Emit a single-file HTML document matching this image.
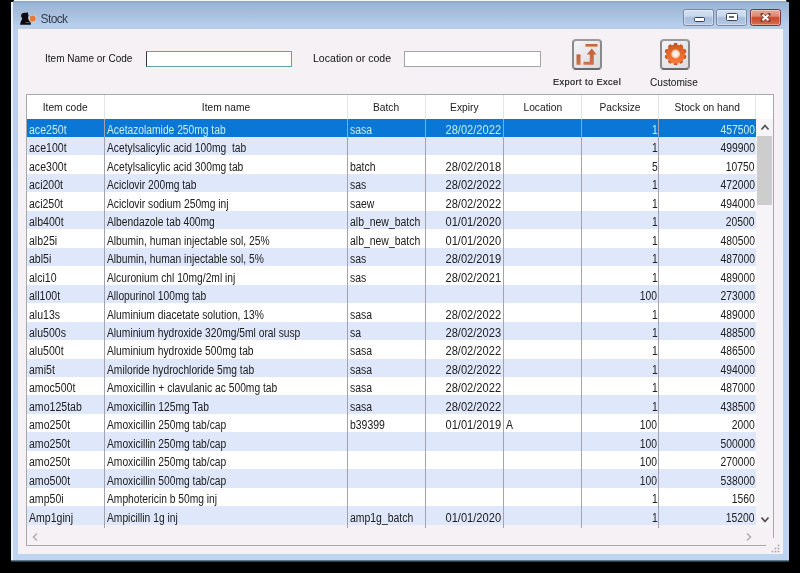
<!DOCTYPE html>
<html><head><meta charset="utf-8">
<style>
*{margin:0;padding:0;box-sizing:border-box}
html,body{width:800px;height:573px;overflow:hidden;background:#000}
body{position:relative;font-family:"Liberation Sans",sans-serif;font-size:11px;color:#202020}
.abs{position:absolute}
#win{position:absolute;left:11px;top:0;width:778px;height:562px;background:linear-gradient(#93acd6 1px,#9cbad8 6px,#a8bcdc 12px,#a9c4e0 17px,#b5cdea 24px,#bad0ec 29px,#c0d4f0 100%)}
#winhi{position:absolute;left:11px;top:0;width:2px;height:561px;background:#e8f2f8}
#wintop{position:absolute;left:11px;top:0;width:778px;height:1px;background:#f2f8f2}
#wintop2{position:absolute;left:13px;top:1px;width:776px;height:1px;background:#90a2bc}
#winbot{position:absolute;left:11px;top:560px;width:778px;height:2px;background:linear-gradient(#7a98a8,#0c2028)}
#content{position:absolute;left:18px;top:29px;width:764.5px;height:525px;background:#f5f1f5}
#content:before{content:"";position:absolute;left:0;top:0;right:0;height:1px;background:#f0f2fa}
#content:after{content:"";position:absolute;left:0;bottom:0;right:0;height:1.5px;background:#eef4fc}
.title{position:absolute;left:40.5px;top:11.8px;font-size:12px;letter-spacing:-0.6px;color:#343a4c;white-space:nowrap}
.btn{position:absolute;top:9px;height:17px;border:1px solid #7888a4;border-radius:2.5px;background:linear-gradient(#d4e0f0 0%,#c8d8ec 40%,#a8bedc 52%,#b4c8e4 100%);box-shadow:inset 0 0 0 1px rgba(255,255,255,0.35)}
.close{background:linear-gradient(#eaa898 0%,#dc8a74 40%,#c8482a 52%,#d6704c 100%);border-color:#6c3a40}
.lbl{position:absolute;white-space:nowrap;color:#141414;transform-origin:0 0}
.inp{position:absolute;background:#fff;border:1px solid #a4a4a4}
.ibox{position:absolute;width:30.5px;height:30.5px;border:2px solid #8a8a8c;border-color:#9a9a9c #8a8a8c #6a6a6c #8a8a8c;border-radius:4px;background:linear-gradient(135deg,#f4f4f8,#dcdce0)}
#tbl{position:absolute;left:26px;top:94px;width:748px;height:452px;border:1px solid #a8a8a8;background:#f5f1f5}
#tblcut{position:absolute;left:766px;top:538px;width:9px;height:9px;background:#f5f1f5}
#hdr{position:absolute;left:27px;top:95px;width:746px;height:23.5px;background:#fff}
.h{position:absolute;top:100.6px;height:14px;text-align:center;white-space:nowrap;color:#202020}
.h span{display:inline-block;transform:scaleX(0.93)}
.hsep{position:absolute;top:95px;height:23.5px;width:1px;background:#e4e2ea}
.row{position:absolute;left:27px;width:729px;height:18.465px}
.row.alt{background:#dfe7fa}
.row.wht{background:#fff}
.row.sel{background:#0a76d6;color:#c4f0e8}
.c{position:absolute;top:4.4px;white-space:nowrap;font-size:12px}
.c.l{transform-origin:0 0}
.c.r{transform-origin:100% 0}
.vsep{position:absolute;top:118.5px;height:409.5px;width:1px;background:#a2a2b0}
</style></head><body><div id="wrap" style="position:absolute;left:0;top:0;width:800px;height:573px;will-change:transform;background:#000">
<div id="win"></div>
<div id="wintop"></div>
<div id="wintop2"></div>
<div id="winhi"></div>
<div id="winbot"></div>
<div class="abs" style="left:786px;top:0;width:3px;height:2px;background:#000;border-bottom-left-radius:3px"></div>
<div class="abs" style="left:11px;top:0;width:3px;height:2px;background:#000;border-bottom-right-radius:3px"></div>
<div class="abs" style="left:13px;top:27px;width:776px;height:2px;background:linear-gradient(#b8cce6,#c4cede)"></div>
<div id="content"></div>
<!-- title icon -->
<svg class="abs" style="left:17px;top:8px" width="22" height="20" viewBox="0 0 22 20">
<ellipse cx="7.8" cy="7.8" rx="3.7" ry="3" fill="#0a0a10"/>
<path d="M8 5.5 L10.6 3.9 L11.2 8 Z" fill="#0a0a10"/>
<path d="M5.6 9.5 L11 9.5 L11 12 Z" fill="#0a0a10"/>
<path d="M5.6 9.5 L11 9.5 L11.5 11.8 L13.8 14.8 L13.8 16.8 L3.1 16.8 L3.6 14 L4.6 12 Z" fill="#0a0a10"/>
<circle cx="15.7" cy="10.5" r="3.5" fill="#f4d0b0"/>
<circle cx="15.7" cy="10.5" r="2.9" fill="#e8783a"/>
<path d="M8.5 14.6 Q11.5 15.2 14.5 13.4" stroke="#9a8a5a" stroke-width="0.7" fill="none"/>
</svg>
<div class="title">Stock</div>
<div class="btn" style="left:683px;width:31px"><div class="abs" style="left:9.5px;top:6.5px;width:11px;height:5px;border:1.5px solid #34405a;background:#fff;border-radius:1.5px"></div></div>
<div class="btn" style="left:716px;width:31px"><div class="abs" style="left:9px;top:2.8px;width:11.5px;height:8.5px;border:1.5px solid #3a4458;background:#fff;border-radius:1.5px"><div class="abs" style="left:2.2px;top:2.2px;width:4.5px;height:2px;background:#6a6a70"></div></div></div>
<div class="btn close" style="left:750px;width:31px"><svg class="abs" style="left:8.5px;top:3px" width="11" height="9" viewBox="0 0 11 9"><path d="M2 1.5 L9 7.5 M9 1.5 L2 7.5" stroke="#7a3a34" stroke-width="3.1" stroke-linecap="round"/><path d="M2.4 1.8 L8.6 7.2 M8.6 1.8 L2.4 7.2" stroke="#fff" stroke-width="2"/></svg></div>

<div class="lbl" style="left:45px;top:52.3px;transform:scaleX(0.91)">Item Name or Code</div>
<div class="inp" style="left:146px;top:50.5px;width:146px;height:16.5px;border-color:#64a0a6;border-left:1.5px solid #28384a"></div>
<div class="lbl" style="left:312.5px;top:52.2px;transform:scaleX(0.96)">Location or code</div>
<div class="inp" style="left:404px;top:50.5px;width:136.5px;height:16.5px"></div>

<div class="ibox" style="left:571.5px;top:39px">
<svg class="abs" style="left:-2px;top:-2px" width="31" height="31" viewBox="0 0 31 31">
<defs><linearGradient id="og" x1="0" y1="0" x2="0" y2="1"><stop offset="0" stop-color="#c06038"/><stop offset="1" stop-color="#d0744a"/></linearGradient></defs>
<rect x="13.5" y="5" width="12" height="2.7" fill="url(#og)"/>
<rect x="4.5" y="15.4" width="4" height="10.4" fill="url(#og)"/>
<path d="M11.5 22.7 L17.8 22.7 L17.8 15.5 L14.8 15.5 L19.8 9.6 L24.6 15.5 L21.8 15.5 L21.8 25.8 L11.5 25.8 Z" fill="url(#og)"/>
</svg></div>
<div class="lbl" style="left:553px;top:77.3px;font-size:9.2px;letter-spacing:0.42px;color:#202020;-webkit-text-stroke:0.2px #202020">Export to Excel</div>

<div class="ibox" style="left:659.5px;top:39px">
<svg class="abs" style="left:-2px;top:-2px" width="31" height="31" viewBox="0 0 31 31">
<defs><linearGradient id="gg" x1="0" y1="0" x2="0" y2="1"><stop offset="0" stop-color="#d2581c"/><stop offset="1" stop-color="#fb7c3c"/></linearGradient>
<radialGradient id="hg"><stop offset="0.35" stop-color="#fff6f4"/><stop offset="1" stop-color="#f8c0a0"/></radialGradient></defs>
<g transform="translate(15.6 15)">
<g fill="#c0581e"><rect x="-1.9" y="-11" width="3.8" height="3.5" rx="1" transform="rotate(0)"/><rect x="-1.9" y="-11" width="3.8" height="3.5" rx="1" transform="rotate(36)"/><rect x="-1.9" y="-11" width="3.8" height="3.5" rx="1" transform="rotate(72)"/><rect x="-1.9" y="-11" width="3.8" height="3.5" rx="1" transform="rotate(108)"/><rect x="-1.9" y="-11" width="3.8" height="3.5" rx="1" transform="rotate(144)"/><rect x="-1.9" y="-11" width="3.8" height="3.5" rx="1" transform="rotate(180)"/><rect x="-1.9" y="-11" width="3.8" height="3.5" rx="1" transform="rotate(216)"/><rect x="-1.9" y="-11" width="3.8" height="3.5" rx="1" transform="rotate(252)"/><rect x="-1.9" y="-11" width="3.8" height="3.5" rx="1" transform="rotate(288)"/><rect x="-1.9" y="-11" width="3.8" height="3.5" rx="1" transform="rotate(324)"/></g>
<circle r="9.5" fill="url(#gg)"/>
<circle r="4.4" fill="url(#hg)"/>
</g></svg></div>
<div class="lbl" style="left:650px;top:75.8px;transform:scaleX(0.92)">Customise</div>

<div id="tbl"></div>
<div id="tblcut"></div>
<div id="hdr"></div>
<div class="hsep" style="left:104px"></div><div class="hsep" style="left:347px"></div><div class="hsep" style="left:425px"></div><div class="hsep" style="left:503px"></div><div class="hsep" style="left:581px"></div><div class="hsep" style="left:658px"></div><div class="hsep" style="left:755px"></div>
<div class="h" style="left:27px;width:77px"><span>Item code</span></div><div class="h" style="left:105px;width:242px"><span>Item name</span></div><div class="h" style="left:348px;width:77px"><span>Batch</span></div><div class="h" style="left:426px;width:77px"><span>Expiry</span></div><div class="h" style="left:504px;width:77px"><span>Location</span></div><div class="h" style="left:582px;width:76px"><span>Packsize</span></div><div class="h" style="left:659px;width:96px"><span>Stock on hand</span></div>
<div class="abs" style="left:756px;top:118.5px;width:17px;height:409.5px;background:#f6f4f6"></div>
<div class="row sel" style="top:118.50px"><span class="c l" style="left:2.00px;transform:scaleX(0.88)">ace250t</span><span class="c l" style="left:79.70px;transform:scaleX(0.855)">Acetazolamide 250mg tab</span><span class="c l" style="left:323.20px;transform:scaleX(0.87)">sasa</span><span class="c r" style="right:254.50px;transform:scaleX(0.925)">28/02/2022</span><span class="c r" style="right:98.80px;transform:scaleX(0.86)">1</span><span class="c r" style="right:1.40px;transform:scaleX(0.86)">457500</span></div>
<div class="row alt" style="top:136.97px"><span class="c l" style="left:2.00px;transform:scaleX(0.88)">ace100t</span><span class="c l" style="left:79.70px;transform:scaleX(0.855)">Acetylsalicylic acid 100mg&nbsp; tab</span><span class="c r" style="right:98.80px;transform:scaleX(0.86)">1</span><span class="c r" style="right:1.40px;transform:scaleX(0.86)">499900</span></div>
<div class="row wht" style="top:155.43px"><span class="c l" style="left:2.00px;transform:scaleX(0.88)">ace300t</span><span class="c l" style="left:79.70px;transform:scaleX(0.855)">Acetylsalicylic acid 300mg tab</span><span class="c l" style="left:323.20px;transform:scaleX(0.87)">batch</span><span class="c r" style="right:254.50px;transform:scaleX(0.925)">28/02/2018</span><span class="c r" style="right:98.80px;transform:scaleX(0.86)">5</span><span class="c r" style="right:1.40px;transform:scaleX(0.86)">10750</span></div>
<div class="row alt" style="top:173.89px"><span class="c l" style="left:2.00px;transform:scaleX(0.88)">aci200t</span><span class="c l" style="left:79.70px;transform:scaleX(0.855)">Aciclovir 200mg tab</span><span class="c l" style="left:323.20px;transform:scaleX(0.87)">sas</span><span class="c r" style="right:254.50px;transform:scaleX(0.925)">28/02/2022</span><span class="c r" style="right:98.80px;transform:scaleX(0.86)">1</span><span class="c r" style="right:1.40px;transform:scaleX(0.86)">472000</span></div>
<div class="row wht" style="top:192.36px"><span class="c l" style="left:2.00px;transform:scaleX(0.88)">aci250t</span><span class="c l" style="left:79.70px;transform:scaleX(0.855)">Aciclovir sodium 250mg inj</span><span class="c l" style="left:323.20px;transform:scaleX(0.87)">saew</span><span class="c r" style="right:254.50px;transform:scaleX(0.925)">28/02/2022</span><span class="c r" style="right:98.80px;transform:scaleX(0.86)">1</span><span class="c r" style="right:1.40px;transform:scaleX(0.86)">494000</span></div>
<div class="row alt" style="top:210.82px"><span class="c l" style="left:2.00px;transform:scaleX(0.88)">alb400t</span><span class="c l" style="left:79.70px;transform:scaleX(0.855)">Albendazole tab 400mg</span><span class="c l" style="left:323.20px;transform:scaleX(0.87)">alb_new_batch</span><span class="c r" style="right:254.50px;transform:scaleX(0.925)">01/01/2020</span><span class="c r" style="right:98.80px;transform:scaleX(0.86)">1</span><span class="c r" style="right:1.40px;transform:scaleX(0.86)">20500</span></div>
<div class="row wht" style="top:229.29px"><span class="c l" style="left:2.00px;transform:scaleX(0.88)">alb25i</span><span class="c l" style="left:79.70px;transform:scaleX(0.855)">Albumin, human injectable sol, 25%</span><span class="c l" style="left:323.20px;transform:scaleX(0.87)">alb_new_batch</span><span class="c r" style="right:254.50px;transform:scaleX(0.925)">01/01/2020</span><span class="c r" style="right:98.80px;transform:scaleX(0.86)">1</span><span class="c r" style="right:1.40px;transform:scaleX(0.86)">480500</span></div>
<div class="row alt" style="top:247.75px"><span class="c l" style="left:2.00px;transform:scaleX(0.88)">abl5i</span><span class="c l" style="left:79.70px;transform:scaleX(0.855)">Albumin, human injectable sol, 5%</span><span class="c l" style="left:323.20px;transform:scaleX(0.87)">sas</span><span class="c r" style="right:254.50px;transform:scaleX(0.925)">28/02/2019</span><span class="c r" style="right:98.80px;transform:scaleX(0.86)">1</span><span class="c r" style="right:1.40px;transform:scaleX(0.86)">487000</span></div>
<div class="row wht" style="top:266.22px"><span class="c l" style="left:2.00px;transform:scaleX(0.88)">alci10</span><span class="c l" style="left:79.70px;transform:scaleX(0.855)">Alcuronium chl 10mg/2ml inj</span><span class="c l" style="left:323.20px;transform:scaleX(0.87)">sas</span><span class="c r" style="right:254.50px;transform:scaleX(0.925)">28/02/2021</span><span class="c r" style="right:98.80px;transform:scaleX(0.86)">1</span><span class="c r" style="right:1.40px;transform:scaleX(0.86)">489000</span></div>
<div class="row alt" style="top:284.69px"><span class="c l" style="left:2.00px;transform:scaleX(0.88)">all100t</span><span class="c l" style="left:79.70px;transform:scaleX(0.855)">Allopurinol 100mg tab</span><span class="c r" style="right:98.80px;transform:scaleX(0.86)">100</span><span class="c r" style="right:1.40px;transform:scaleX(0.86)">273000</span></div>
<div class="row wht" style="top:303.15px"><span class="c l" style="left:2.00px;transform:scaleX(0.88)">alu13s</span><span class="c l" style="left:79.70px;transform:scaleX(0.855)">Aluminium diacetate solution, 13%</span><span class="c l" style="left:323.20px;transform:scaleX(0.87)">sasa</span><span class="c r" style="right:254.50px;transform:scaleX(0.925)">28/02/2022</span><span class="c r" style="right:98.80px;transform:scaleX(0.86)">1</span><span class="c r" style="right:1.40px;transform:scaleX(0.86)">489000</span></div>
<div class="row alt" style="top:321.62px"><span class="c l" style="left:2.00px;transform:scaleX(0.88)">alu500s</span><span class="c l" style="left:79.70px;transform:scaleX(0.855)">Aluminium hydroxide 320mg/5ml oral susp</span><span class="c l" style="left:323.20px;transform:scaleX(0.87)">sa</span><span class="c r" style="right:254.50px;transform:scaleX(0.925)">28/02/2023</span><span class="c r" style="right:98.80px;transform:scaleX(0.86)">1</span><span class="c r" style="right:1.40px;transform:scaleX(0.86)">488500</span></div>
<div class="row wht" style="top:340.08px"><span class="c l" style="left:2.00px;transform:scaleX(0.88)">alu500t</span><span class="c l" style="left:79.70px;transform:scaleX(0.855)">Aluminium hydroxide 500mg tab</span><span class="c l" style="left:323.20px;transform:scaleX(0.87)">sasa</span><span class="c r" style="right:254.50px;transform:scaleX(0.925)">28/02/2022</span><span class="c r" style="right:98.80px;transform:scaleX(0.86)">1</span><span class="c r" style="right:1.40px;transform:scaleX(0.86)">486500</span></div>
<div class="row alt" style="top:358.54px"><span class="c l" style="left:2.00px;transform:scaleX(0.88)">ami5t</span><span class="c l" style="left:79.70px;transform:scaleX(0.855)">Amiloride hydrochloride 5mg tab</span><span class="c l" style="left:323.20px;transform:scaleX(0.87)">sasa</span><span class="c r" style="right:254.50px;transform:scaleX(0.925)">28/02/2022</span><span class="c r" style="right:98.80px;transform:scaleX(0.86)">1</span><span class="c r" style="right:1.40px;transform:scaleX(0.86)">494000</span></div>
<div class="row wht" style="top:377.01px"><span class="c l" style="left:2.00px;transform:scaleX(0.88)">amoc500t</span><span class="c l" style="left:79.70px;transform:scaleX(0.855)">Amoxicillin + clavulanic ac 500mg tab</span><span class="c l" style="left:323.20px;transform:scaleX(0.87)">sasa</span><span class="c r" style="right:254.50px;transform:scaleX(0.925)">28/02/2022</span><span class="c r" style="right:98.80px;transform:scaleX(0.86)">1</span><span class="c r" style="right:1.40px;transform:scaleX(0.86)">487000</span></div>
<div class="row alt" style="top:395.48px"><span class="c l" style="left:2.00px;transform:scaleX(0.88)">amo125tab</span><span class="c l" style="left:79.70px;transform:scaleX(0.855)">Amoxicillin 125mg Tab</span><span class="c l" style="left:323.20px;transform:scaleX(0.87)">sasa</span><span class="c r" style="right:254.50px;transform:scaleX(0.925)">28/02/2022</span><span class="c r" style="right:98.80px;transform:scaleX(0.86)">1</span><span class="c r" style="right:1.40px;transform:scaleX(0.86)">438500</span></div>
<div class="row wht" style="top:413.94px"><span class="c l" style="left:2.00px;transform:scaleX(0.88)">amo250t</span><span class="c l" style="left:79.70px;transform:scaleX(0.855)">Amoxicillin 250mg tab/cap</span><span class="c l" style="left:323.20px;transform:scaleX(0.87)">b39399</span><span class="c r" style="right:254.50px;transform:scaleX(0.925)">01/01/2019</span><span class="c l" style="left:478.50px;transform:scaleX(0.87)">A</span><span class="c r" style="right:98.80px;transform:scaleX(0.86)">100</span><span class="c r" style="right:1.40px;transform:scaleX(0.86)">2000</span></div>
<div class="row alt" style="top:432.40px"><span class="c l" style="left:2.00px;transform:scaleX(0.88)">amo250t</span><span class="c l" style="left:79.70px;transform:scaleX(0.855)">Amoxicillin 250mg tab/cap</span><span class="c r" style="right:98.80px;transform:scaleX(0.86)">100</span><span class="c r" style="right:1.40px;transform:scaleX(0.86)">500000</span></div>
<div class="row wht" style="top:450.87px"><span class="c l" style="left:2.00px;transform:scaleX(0.88)">amo250t</span><span class="c l" style="left:79.70px;transform:scaleX(0.855)">Amoxicillin 250mg tab/cap</span><span class="c r" style="right:98.80px;transform:scaleX(0.86)">100</span><span class="c r" style="right:1.40px;transform:scaleX(0.86)">270000</span></div>
<div class="row alt" style="top:469.33px"><span class="c l" style="left:2.00px;transform:scaleX(0.88)">amo500t</span><span class="c l" style="left:79.70px;transform:scaleX(0.855)">Amoxicillin 500mg tab/cap</span><span class="c r" style="right:98.80px;transform:scaleX(0.86)">100</span><span class="c r" style="right:1.40px;transform:scaleX(0.86)">538000</span></div>
<div class="row wht" style="top:487.80px"><span class="c l" style="left:2.00px;transform:scaleX(0.88)">amp50i</span><span class="c l" style="left:79.70px;transform:scaleX(0.855)">Amphotericin b 50mg inj</span><span class="c r" style="right:98.80px;transform:scaleX(0.86)">1</span><span class="c r" style="right:1.40px;transform:scaleX(0.86)">1560</span></div>
<div class="row alt" style="top:506.26px"><span class="c l" style="left:2.00px;transform:scaleX(0.88)">Amp1ginj</span><span class="c l" style="left:79.70px;transform:scaleX(0.855)">Ampicillin 1g inj</span><span class="c l" style="left:323.20px;transform:scaleX(0.87)">amp1g_batch</span><span class="c r" style="right:254.50px;transform:scaleX(0.925)">01/01/2020</span><span class="c r" style="right:98.80px;transform:scaleX(0.86)">1</span><span class="c r" style="right:1.40px;transform:scaleX(0.86)">15200</span></div>
<div class="vsep" style="left:104px"></div><div class="vsep" style="left:347px"></div><div class="vsep" style="left:425px"></div><div class="vsep" style="left:503px"></div><div class="vsep" style="left:581px"></div><div class="vsep" style="left:658px"></div>
<!-- v scrollbar -->
<svg class="abs" style="left:760px;top:123px" width="10" height="8" viewBox="0 0 10 8"><path d="M1.5 6.5 L5 2.5 L8.5 6.5" stroke="#505058" stroke-width="1.8" fill="none"/></svg>
<div class="abs" style="left:757px;top:135.5px;width:15px;height:69px;background:#cdcdcd"></div>
<svg class="abs" style="left:760px;top:516px" width="10" height="8" viewBox="0 0 10 8"><path d="M1.5 1.5 L5 5.5 L8.5 1.5" stroke="#505058" stroke-width="1.8" fill="none"/></svg>
<!-- h scrollbar -->
<svg class="abs" style="left:31px;top:532px" width="8" height="10" viewBox="0 0 8 10"><path d="M6 1.5 L2.5 5 L6 8.5" stroke="#b0b0b4" stroke-width="1.6" fill="none"/></svg>
<svg class="abs" style="left:745px;top:532px" width="8" height="10" viewBox="0 0 8 10"><path d="M2 1.5 L5.5 5 L2 8.5" stroke="#b0b0b4" stroke-width="1.6" fill="none"/></svg>
<!-- grip -->
<svg class="abs" style="left:770px;top:543px" width="12" height="12" viewBox="0 0 12 12" fill="#a8a8ac">
<rect x="7.7" y="1.7" width="1.6" height="1.6"/><rect x="4.7" y="4.7" width="1.6" height="1.6"/><rect x="7.7" y="4.7" width="1.6" height="1.6"/>
<rect x="1.7" y="7.7" width="1.6" height="1.6"/><rect x="4.7" y="7.7" width="1.6" height="1.6"/><rect x="7.7" y="7.7" width="1.6" height="1.6"/>
</svg>
</div></body></html>
